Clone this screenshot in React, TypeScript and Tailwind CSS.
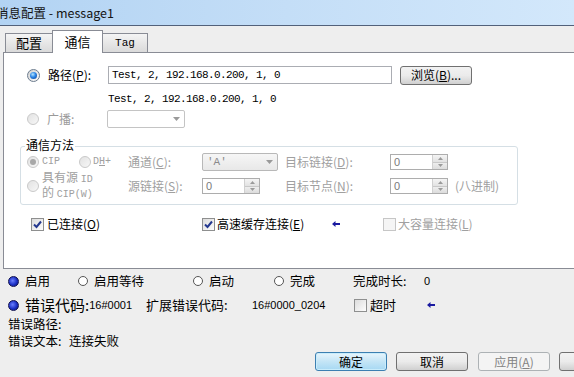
import { ReactNode } from 'react';

const mono = "font-['Liberation_Mono',monospace]";

function Win7Radio({ checked, disabled }: { checked?: boolean; disabled?: boolean }) {
  if (disabled) {
    return (
      <span className="w-[12px] h-[12px] shrink-0 rounded-full border border-[#c9c9c9] bg-gradient-to-br from-[#e2e2e2] to-[#f7f7f7] flex items-center justify-center">
        {checked && <span className="w-[6px] h-[6px] rounded-full bg-[#a8a8a8]" />}
      </span>
    );
  }
  return (
    <span className="w-[13px] h-[13px] shrink-0 rounded-full border border-[#6c7c8e] bg-gradient-to-br from-[#d2d2d2] to-[#fbfbfb] flex items-center justify-center">
      {checked && (
        <span className="w-[7px] h-[7px] rounded-full bg-[radial-gradient(circle_at_40%_35%,#b5e6ff_0%,#2b84e6_45%,#0a3c8c_100%)]" />
      )}
    </span>
  );
}

function ClassicRadio({ checked }: { checked?: boolean }) {
  return checked ? (
    <span className="w-[11px] h-[11px] shrink-0 rounded-full border border-[#101050] bg-[radial-gradient(circle_at_40%_40%,#6b7fff_0%,#1a2fc4_55%,#0b1470_100%)]" />
  ) : (
    <span className="w-[10px] h-[10px] shrink-0 rounded-full border border-[#555555] bg-white" />
  );
}

function Check({ checked, disabled }: { checked?: boolean; disabled?: boolean }) {
  return (
    <span
      className={`w-[13px] h-[13px] shrink-0 border flex items-center justify-center ${
        disabled ? 'border-[#c6c6c6] bg-[#f5f5f5]' : 'border-[#8e8f8f] bg-gradient-to-br from-[#dcdcdc] to-[#fdfdfd]'
      }`}
    >
      {checked && (
        <svg width="11" height="11" viewBox="0 0 11 11">
          <path d="M2 5.5 L4.5 8 L9 2.5" fill="none" stroke="#24388f" strokeWidth="2" />
        </svg>
      )}
    </span>
  );
}

function Arrow() {
  return (
    <svg width="8" height="6" viewBox="0 0 8 6" className="shrink-0">
      <path d="M0 3 L3.5 0 L3.5 2 L8 2 L8 4 L3.5 4 L3.5 6 Z" fill="#1a1aa0" />
    </svg>
  );
}

function Combo({ w, value, gray }: { w: string; value?: string; gray?: boolean }) {
  return (
    <div
      className={`${w} h-[18px] shrink-0 rounded-[2px] border flex items-center ${
        gray ? 'border-[#b8b8b8] bg-gradient-to-b from-[#f6f6f6] to-[#e8e8e8]' : 'border-[#c4c4c4] bg-white'
      }`}
    >
      <span className={`flex-1 pl-[4px] text-[11px] text-[#8a8a8a] ${mono}`}>{value}</span>
      <svg width="14" height="8" viewBox="0 0 14 8" className="shrink-0">
        <path d="M3 2 L10 2 L6.5 6 Z" fill="#9a9a9a" />
      </svg>
    </div>
  );
}

function Spin({ value }: { value: string }) {
  return (
    <div className="w-[58px] h-[16px] shrink-0 border border-[#adadad] bg-white flex">
      <span className="flex-1 pl-[3px] text-[11px] leading-[14px] text-[#7a7a7a] font-['Liberation_Sans',sans-serif]">{value}</span>
      <div className="w-[15px] flex flex-col border-l border-[#d0d0d0]">
        <div className="flex-1 bg-gradient-to-b from-[#f4f4f4] to-[#e2e2e2] border-b border-[#c8c8c8] flex items-center justify-center">
          <svg width="5" height="3" viewBox="0 0 5 3"><path d="M0 3 L2.5 0 L5 3 Z" fill="#9a9a9a" /></svg>
        </div>
        <div className="flex-1 bg-gradient-to-b from-[#eeeeee] to-[#dcdcdc] flex items-center justify-center">
          <svg width="5" height="3" viewBox="0 0 5 3"><path d="M0 0 L5 0 L2.5 3 Z" fill="#9a9a9a" /></svg>
        </div>
      </div>
    </div>
  );
}

function Btn({ children, kind }: { children?: ReactNode; kind?: 'default' | 'disabled' }) {
  const style =
    kind === 'default'
      ? 'border-[#3c7fb1] bg-gradient-to-b from-[#e8f5fc] via-[#c4e5f6] to-[#a6d8f3] shadow-[inset_0_0_0_1px_#c9ecfb]'
      : kind === 'disabled'
      ? 'border-[#adb2b5] bg-[#f4f4f4] text-[#838383]'
      : 'border-[#707070] bg-gradient-to-b from-[#f2f2f2] via-[#ebebeb] to-[#d0d0d0]';
  return (
    <div className={`w-[72px] h-[19px] shrink-0 rounded-[3px] border flex items-center justify-center ${style}`}>
      {children}
    </div>
  );
}

function Tab({ label, w, className = '' }: { label: string; w: string; className?: string }) {
  return (
    <div
      className={`${w} h-[19px] border border-b-0 border-[#898c95] bg-gradient-to-b from-[#f4f4f4] to-[#dadada] flex items-center justify-center ${className}`}
    >
      {label}
    </div>
  );
}

export default function App() {
  return (
    <div className="w-[574px] h-[377px] overflow-hidden bg-[#eeeeee] text-[12px] leading-[14px] text-black font-['Noto_Sans_CJK_SC',sans-serif] flex flex-col">
      {/* title bar */}
      <div className="h-[26px] shrink-0 border-b border-[#52617a] bg-gradient-to-r from-[#b2d3f3] via-[#c4def7] to-[#d3e8fb] flex items-center">
        <span className="ml-[-4px] text-[12.5px] text-[#151515]">消息配置 - message1</span>
      </div>

      {/* tabs */}
      <div className="h-[26px] shrink-0 flex items-end pl-[5px]">
        <Tab label="配置" w="w-[47px]" className="text-[13px] border-r-0" />
        <div className="relative z-10 mb-[-1px] h-[23px] w-[51px] bg-white border border-b-0 border-[#898c95] flex items-center justify-center text-[13px]">
          通信
        </div>
        <Tab label="Tag" w="w-[45px]" className={`border-l-0 text-[11px] ${mono}`} />
      </div>

      {/* panel */}
      <div className="ml-[3px] w-[600px] h-[217px] shrink-0 bg-white border border-[#898c95] flex flex-col">
        <div className="mt-[13px] h-[18px] flex items-center pl-[23px]">
          <Win7Radio checked />
          <span className="ml-[8px] w-[60px]">
            路径(<u>P</u>):
          </span>
          <div className={`w-[284px] h-[18px] border border-[#abadb3] pl-[3px] flex items-center text-[11px] tracking-[-0.6px] ${mono}`}>
            Test, 2, 192.168.0.200, 1, 0
          </div>
          <div className="ml-[8px]">
            <Btn>
              浏览(<u>B</u>)...
            </Btn>
          </div>
        </div>

        <div className={`mt-[8px] h-[14px] pl-[104px] text-[11px] tracking-[-0.6px] ${mono}`}>Test, 2, 192.168.0.200, 1, 0</div>

        <div className="mt-[4px] h-[18px] flex items-center pl-[23px]">
          <Win7Radio disabled />
          <span className="ml-[8px] w-[60px] text-[#9a9a9a]">广播:</span>
          <Combo w="w-[78px]" />
        </div>

        {/* group box */}
        <div className="relative mt-[18px] ml-[16px] w-[498px] h-[59px] border border-[#d5dfe5] rounded-[3px] flex flex-col text-[#a0a0a0]">
          <span className="absolute top-[-9px] left-[4px] bg-white px-[1px] text-black">通信方法</span>
          <div className="mt-[6px] h-[18px] flex items-center">
            <div className="w-[107px] flex items-center pl-[6px]">
              <Win7Radio disabled checked />
              <span className={`ml-[3px] w-[37px] text-[10px] ${mono}`}>CIP</span>
              <Win7Radio disabled />
              <span className={`ml-[2px] text-[10px] ${mono}`}>
                D<u>H</u>+
              </span>
            </div>
            <span className="w-[74px]">
              通道(<u>C</u>):
            </span>
            <Combo w="w-[76px]" value="'A'" gray />
            <span className="ml-[7px] w-[105px]">
              目标链接(<u>D</u>):
            </span>
            <Spin value="0" />
          </div>
          <div className="mt-[2px] h-[26px] flex items-center">
            <div className="w-[107px] flex items-center pl-[6px]">
              <Win7Radio disabled />
              <span className="ml-[3px] leading-[12px] text-[12px] whitespace-nowrap">
                具有源 <span className={`text-[10px] ${mono}`}>ID</span>
                <br />的 <span className={`text-[10px] ${mono}`}>CIP(W)</span>
              </span>
            </div>
            <span className="w-[74px]">
              源链接(<u>S</u>):
            </span>
            <Spin value="0" />
            <span className="ml-[25px] w-[105px]">
              目标节点(<u>N</u>):
            </span>
            <Spin value="0" />
            <span className="ml-[7px]">(八进制)</span>
          </div>
        </div>

        <div className="mt-[12px] h-[14px] flex items-center pl-[27px]">
          <div className="w-[171px] flex items-center">
            <Check checked />
            <span className="ml-[3px]">
              已连接(<u>O</u>)
            </span>
          </div>
          <div className="w-[130px] flex items-center">
            <Check checked />
            <span className="ml-[2px]">
              高速缓存连接(<u>E</u>)
            </span>
          </div>
          <Arrow />
          <div className="ml-[43px] flex items-center text-[#a0a0a0]">
            <Check disabled />
            <span className="ml-[2px]">
              大容量连接(<u>L</u>)
            </span>
          </div>
        </div>
      </div>

      {/* status area */}
      <div className="mt-[4px] h-[16px] flex items-center pl-[8px] text-[12.5px] leading-[16px]">
        <div className="w-[70px] flex items-center">
          <ClassicRadio checked />
          <span className="ml-[6px]">启用</span>
        </div>
        <div className="w-[115px] flex items-center">
          <ClassicRadio />
          <span className="ml-[6px]">启用等待</span>
        </div>
        <div className="w-[81px] flex items-center">
          <ClassicRadio />
          <span className="ml-[6px]">启动</span>
        </div>
        <div className="w-[79px] flex items-center">
          <ClassicRadio />
          <span className="ml-[6px]">完成</span>
        </div>
        <span className="w-[71px]">完成时长:</span>
        <span className="text-[11px] font-['Liberation_Sans',sans-serif]">0</span>
      </div>

      <div className="mt-[7px] h-[18px] flex items-center pl-[8px] text-[12.5px] leading-[16px]">
        <div className="w-[138px] flex items-center">
          <ClassicRadio checked />
          <span className="ml-[6px] text-[15px] leading-[18px]">错误代码:</span>
          <span className="text-[11px] font-['Liberation_Sans',sans-serif]">16#0001</span>
        </div>
        <span className="w-[106px] text-[13px]">扩展错误代码:</span>
        <span className="w-[102px] text-[11px] font-['Liberation_Sans',sans-serif]">16#0000_0204</span>
        <div className="w-[73px] flex items-center">
          <Check />
          <span className="ml-[3px] text-[13px]">超时</span>
        </div>
        <Arrow />
      </div>

      <div className="mt-[2px] h-[16px] leading-[16px] flex items-center pl-[8px] text-[12.5px]">错误路径:</div>
      <div className="mt-[1px] h-[16px] leading-[16px] flex items-center pl-[8px] text-[12.5px]">
        <span className="w-[61px]">错误文本:</span>
        <span>连接失败</span>
      </div>

      <div className="mt-[3px] flex pl-[315px]">
        <Btn kind="default">确定</Btn>
        <div className="ml-[9px]">
          <Btn>取消</Btn>
        </div>
        <div className="ml-[10px]">
          <Btn kind="disabled">
            应用(<u>A</u>)
          </Btn>
        </div>
        <div className="ml-[9px]">
          <Btn />
        </div>
      </div>
    </div>
  );
}
